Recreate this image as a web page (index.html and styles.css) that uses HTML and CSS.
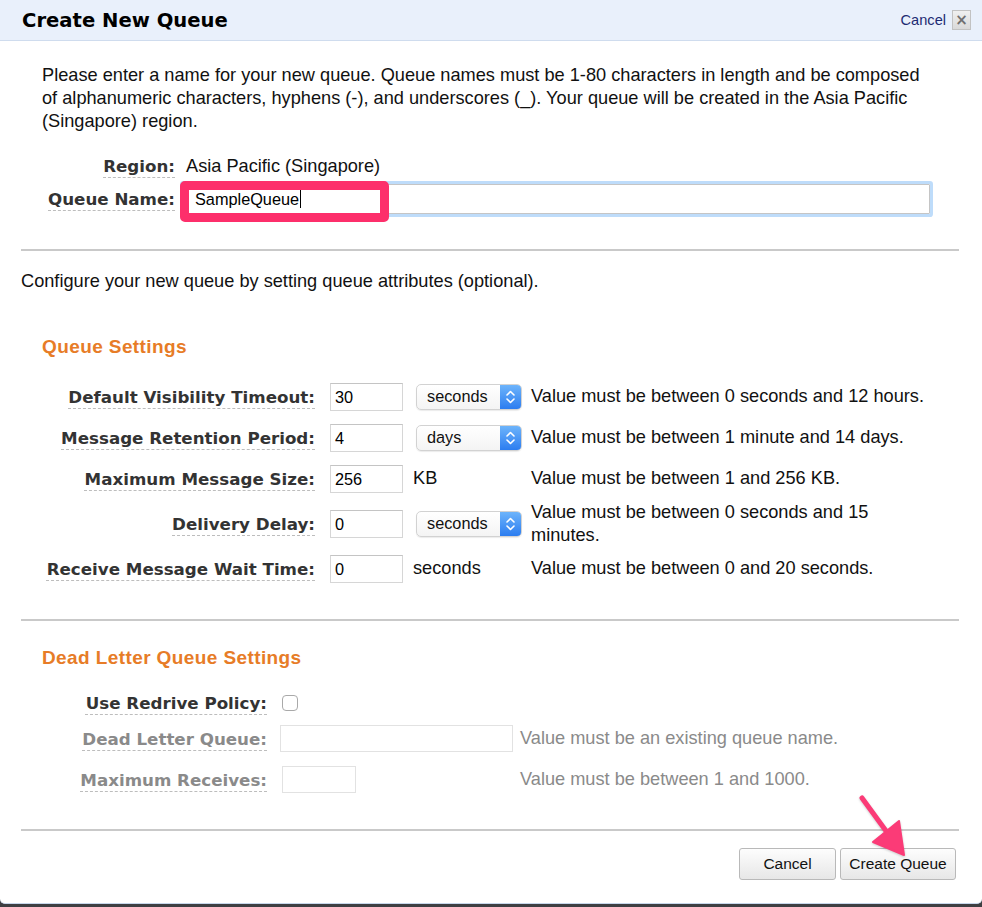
FILE: index.html
```html
<!DOCTYPE html>
<html lang="en">
<head>
<meta charset="utf-8">
<title>Create New Queue</title>
<link rel="stylesheet" href="styles.css">
</head>
<body>
<div class="dialog">
  <header class="dlg-head">
    <h1 class="dlg-title">Create New Queue</h1>
    <div class="head-actions">
      <a class="cancel-link" href="#">Cancel</a>
      <span class="close-box">&#215;</span>
    </div>
  </header>

  <div class="dlg-body">
    <p class="intro">Please enter a name for your new queue. Queue names must be 1-80 characters in length and be composed of alphanumeric characters, hyphens (-), and underscores (_). Your queue will be created in the Asia Pacific (Singapore) region.</p>

    <div class="name-form">
      <div class="name-row region-row">
        <span class="lbl name-lbl">Region:</span>
        <span class="region-val">Asia Pacific (Singapore)</span>
      </div>
      <div class="name-row queue-row">
        <span class="lbl name-lbl">Queue Name:</span>
        <div class="name-input"><span class="typed">SampleQueue</span><span class="caret"></span></div>
      </div>
    </div>

    <div class="rule"></div>

    <p class="configure">Configure your new queue by setting queue attributes (optional).</p>

    <section class="settings">
      <h2 class="section-title">Queue Settings</h2>
      <div class="attr-row">
        <span class="lbl attr-lbl">Default Visibility Timeout:</span>
        <div class="txt-input">30</div>
        <div class="unit"><div class="select">seconds<span class="sel-btn"><svg viewBox="0 0 21 24" width="21" height="24"><path d="M7 10 L10.5 6.5 L14 10 M7 14 L10.5 17.5 L14 14" fill="none" stroke="#fff" stroke-width="1.6" stroke-linecap="round" stroke-linejoin="round"/></svg></span></div></div>
        <span class="help">Value must be between 0 seconds and 12 hours.</span>
      </div>
      <div class="attr-row">
        <span class="lbl attr-lbl">Message Retention Period:</span>
        <div class="txt-input">4</div>
        <div class="unit"><div class="select">days<span class="sel-btn"><svg viewBox="0 0 21 24" width="21" height="24"><path d="M7 10 L10.5 6.5 L14 10 M7 14 L10.5 17.5 L14 14" fill="none" stroke="#fff" stroke-width="1.6" stroke-linecap="round" stroke-linejoin="round"/></svg></span></div></div>
        <span class="help">Value must be between 1 minute and 14 days.</span>
      </div>
      <div class="attr-row">
        <span class="lbl attr-lbl">Maximum Message Size:</span>
        <div class="txt-input">256</div>
        <div class="unit"><span class="unit-text">KB</span></div>
        <span class="help">Value must be between 1 and 256 KB.</span>
      </div>
      <div class="attr-row attr-row-tall">
        <span class="lbl attr-lbl">Delivery Delay:</span>
        <div class="txt-input">0</div>
        <div class="unit"><div class="select">seconds<span class="sel-btn"><svg viewBox="0 0 21 24" width="21" height="24"><path d="M7 10 L10.5 6.5 L14 10 M7 14 L10.5 17.5 L14 14" fill="none" stroke="#fff" stroke-width="1.6" stroke-linecap="round" stroke-linejoin="round"/></svg></span></div></div>
        <span class="help">Value must be between 0 seconds and 15 minutes.</span>
      </div>
      <div class="attr-row">
        <span class="lbl attr-lbl">Receive Message Wait Time:</span>
        <div class="txt-input">0</div>
        <div class="unit"><span class="unit-text">seconds</span></div>
        <span class="help">Value must be between 0 and 20 seconds.</span>
      </div>
    </section>

    <div class="rule rule-mid"></div>

    <section class="dead-letter">
      <h2 class="section-title">Dead Letter Queue Settings</h2>
      <div class="dl-row dl-row-check">
        <span class="lbl dl-lbl">Use Redrive Policy:</span>
        <span class="checkbox"></span>
      </div>
      <div class="dl-row dl-row-queue">
        <span class="lbl dl-lbl lbl-off">Dead Letter Queue:</span>
        <div class="dl-ctrl"><div class="txt-input off-input wide-input"></div></div>
        <span class="help help-off">Value must be an existing queue name.</span>
      </div>
      <div class="dl-row dl-row-max">
        <span class="lbl dl-lbl lbl-off">Maximum Receives:</span>
        <div class="dl-ctrl"><div class="txt-input off-input small-input"></div></div>
        <span class="help help-off">Value must be between 1 and 1000.</span>
      </div>
    </section>

    <div class="rule rule-foot"></div>

    <div class="buttons">
      <button class="btn btn-cancel" type="button">Cancel</button>
      <button class="btn btn-create" type="button">Create Queue</button>
    </div>
  </div>

  <div class="name-highlight"></div>
  <svg class="pointer-arrow" viewBox="0 0 60 70" width="60" height="70">
    <path d="M4 3 L31 40" stroke="#fb3b77" stroke-width="5" stroke-linecap="round"/>
    <path d="M15 47 L41 26 L46 60 Z" fill="#fb3b77" stroke="#fb3b77" stroke-width="2" stroke-linejoin="round"/>
  </svg>
</div>
</body>
</html>
```

FILE: styles.css
```css
html, body {
  margin: 0;
  padding: 0;
}

body {
  background: #3e3f42;
  font-family: "Liberation Sans", Arial, sans-serif;
  color: #111;
}

.dialog {
  position: relative;
  width: 982px;
  height: 904px;
  box-sizing: border-box;
  background: #fff;
  border-bottom: 1px solid #c7d6ea;
  border-radius: 0 0 5px 5px;
}

/* header */
.dlg-head {
  height: 41px;
  box-sizing: border-box;
  background: #e9f0fb;
  border-bottom: 1px solid #cfdcee;
  display: flex;
  align-items: center;
  justify-content: space-between;
  padding: 0 11px 0 22px;
}

.dlg-title {
  margin: 0;
  font-family: "DejaVu Sans", Verdana, sans-serif;
  font-weight: bold;
  font-size: 19.6px;
  color: #000;
}

.head-actions {
  display: flex;
  align-items: center;
  gap: 6px;
}

.cancel-link {
  font-size: 14.6px;
  color: #1d2b73;
  text-decoration: none;
}

.close-box {
  width: 17px;
  height: 18px;
  border: 1px solid #c2c2c2;
  background: linear-gradient(#f0f0f0, #d9d9d9);
  color: #707070;
  font-family: "DejaVu Sans", sans-serif;
  font-weight: bold;
  font-size: 15px;
  line-height: 18px;
  text-align: center;
}

/* body */
.dlg-body {
  padding: 0 23px 0 21px;
}

.intro {
  margin: 0;
  padding: 23px 29px 0 21px;
  font-size: 18.2px;
  line-height: 23px;
}

.lbl {
  font-family: "DejaVu Sans", Verdana, sans-serif;
  font-weight: bold;
  font-size: 16.7px;
  line-height: 20px;
  color: #333;
  text-align: right;
}

.name-lbl, .attr-lbl, .dl-lbl {
  display: flex;
  justify-content: flex-end;
  text-decoration: underline dashed #bdbdbd;
  text-decoration-thickness: 1px;
  text-underline-offset: 5px;
}

.name-form {
  padding-left: 21px;
  margin-top: 21px;
}

.name-row {
  display: flex;
  align-items: center;
}

.name-lbl {
  width: 133px;
  flex: none;
}

.region-row {
  height: 24px;
}

.region-val {
  margin-left: 11px;
  font-size: 18.2px;
}

.queue-row {
  height: 42px;
}

.name-input {
  margin-left: 8px;
  width: 747px;
  height: 30px;
  box-sizing: border-box;
  border: 1px solid #c5c5c5;
  box-shadow: 0 0 0 3px #bedcfa;
  border-radius: 1px;
  display: flex;
  align-items: center;
  padding-left: 11px;
  font-size: 16.3px;
  color: #000;
}

.caret {
  width: 1px;
  height: 18px;
  background: #000;
  margin-left: 1px;
}

.rule {
  border-top: 2px solid #c9c9c9;
  margin-top: 29px;
}

.configure {
  margin: 20px 0 0;
  font-size: 18.2px;
  line-height: 20px;
}

.settings {
  padding-left: 21px;
  margin-top: 46px;
}

.section-title {
  margin: 0;
  font-family: "Liberation Sans", Arial, sans-serif;
  font-weight: bold;
  font-size: 19px;
  line-height: 20px;
  color: #e77c27;
  letter-spacing: 0.4px;
}

.settings .section-title {
  margin-bottom: 19px;
}

.attr-row {
  display: flex;
  align-items: center;
  min-height: 41px;
}

.attr-row-tall {
  padding: 1.5px 0;
}

.attr-lbl {
  width: 273px;
  flex: none;
}

.txt-input {
  width: 73px;
  height: 28px;
  box-sizing: border-box;
  border: 1px solid #d6d6d6;
  border-top-color: #c4c4c4;
  background: #fff;
  font-size: 16.3px;
  line-height: 26px;
  padding-left: 4px;
  color: #000;
  flex: none;
}

.attr-row .txt-input {
  margin-left: 15px;
}

.unit {
  width: 109px;
  margin-left: 10px;
  flex: none;
}

.unit-text {
  font-size: 18.2px;
}

.select {
  margin-left: 3px;
  width: 106px;
  height: 26px;
  box-sizing: border-box;
  border: 1px solid #d2d2d2;
  border-radius: 5px;
  background: linear-gradient(#ffffff, #f4f4f4);
  font-size: 16.3px;
  line-height: 23px;
  padding-left: 10px;
  position: relative;
  overflow: hidden;
  box-shadow: 0 1px 1px rgba(0,0,0,0.08);
}

.sel-btn {
  position: absolute;
  right: 0;
  top: 0;
  width: 21px;
  height: 24px;
  background: linear-gradient(#6db4fb, #2c7df0);
  display: flex;
}

.help {
  margin-left: 9px;
  width: 405px;
  font-size: 18.2px;
  line-height: 23px;
}

.rule-mid {
  margin-top: 30px;
}

.dead-letter {
  padding-left: 21px;
  margin-top: 27px;
}

.dl-row {
  display: flex;
  align-items: center;
}

.dl-lbl {
  width: 225px;
  flex: none;
}

.dl-row-check {
  height: 28px;
  margin-top: 21px;
}

.dl-row-queue {
  height: 27px;
  margin-top: 8px;
}

.dl-row-max {
  height: 27px;
  margin-top: 14px;
}

.checkbox {
  margin-left: 15px;
  width: 16px;
  height: 16px;
  box-sizing: border-box;
  border: 1px solid #a9a9a9;
  border-radius: 4px;
  background: #fff;
}

.dl-ctrl {
  width: 240px;
  margin-left: 13px;
  flex: none;
}

.off-input {
  height: 27px;
  border-color: #e2e2e2;
}

.wide-input {
  width: 233px;
}

.small-input {
  width: 74px;
  margin-left: 2px;
}

.lbl-off {
  color: #8a8a8a;
}

.help-off {
  margin-left: 0;
  color: #8a8a8a;
}

.rule-foot {
  margin-top: 36px;
}

.buttons {
  display: flex;
  justify-content: flex-end;
  gap: 4px;
  margin-top: 17px;
  padding-right: 3px;
}

.btn {
  height: 32px;
  box-sizing: border-box;
  border: 1px solid #b9b9b9;
  border-radius: 3px;
  background: linear-gradient(#fdfdfd, #e7e7e7);
  font-family: "Liberation Sans", Arial, sans-serif;
  font-size: 15.5px;
  color: #111;
  padding: 0;
}

.btn-cancel {
  width: 97px;
}

.btn-create {
  width: 116px;
}

/* annotation overlays */
.name-highlight {
  position: absolute;
  left: 180px;
  top: 181px;
  width: 209px;
  height: 41px;
  box-sizing: border-box;
  border: 9px solid #fd2f6b;
  border-radius: 5px;
}

.pointer-arrow {
  position: absolute;
  left: 858px;
  top: 795px;
  filter: drop-shadow(0 1px 1px rgba(0,0,0,0.2));
}
```
